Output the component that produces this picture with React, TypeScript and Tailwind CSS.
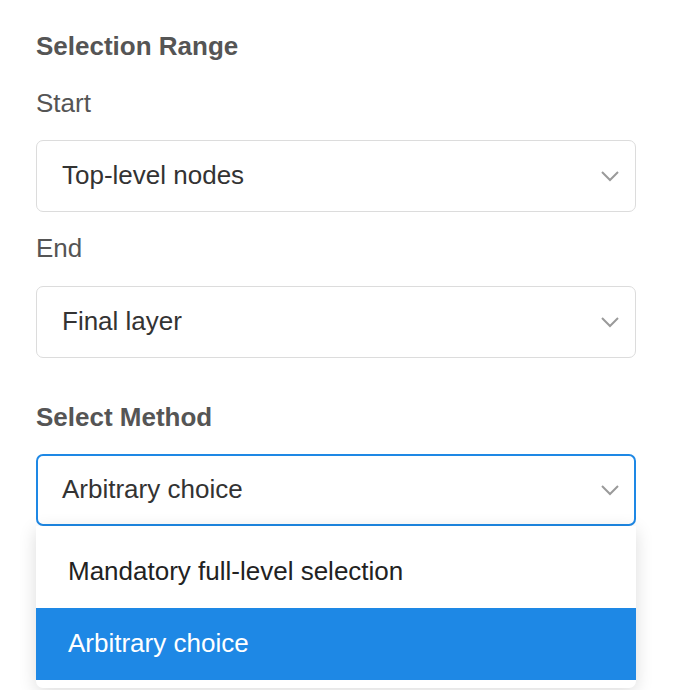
import React, { useState } from 'react';

const font = { fontFamily: '"Liberation Sans", Arial, sans-serif' };

function Chevron() {
  return (
    <svg width="20" height="12" viewBox="0 0 20 12" className="shrink-0">
      <path d="M2 2 L10 10 L18 2" fill="none" stroke="#9a9a9a" strokeWidth="2" />
    </svg>
  );
}

interface SelectBoxProps {
  value: string;
  active?: boolean;
}

function SelectBox({ value, active }: SelectBoxProps) {
  return (
    <div
      className={
        active
          ? 'h-[72px] rounded-[7px] border-2 border-[#1e88e5] bg-white flex items-center justify-between pl-[24px] pr-[14px]'
          : 'h-[72px] rounded-[7px] border-[1.5px] border-[#dcdcdc] bg-white flex items-center justify-between pl-[25px] pr-[15px]'
      }
    >
      <span className="text-[26px] leading-[30px] pb-[2px] text-[#333]">{value}</span>
      <Chevron />
    </div>
  );
}

export default function App() {
  const options = ['Mandatory full-level selection', 'Arbitrary choice'];
  const [method] = useState('Arbitrary choice');

  return (
    <div className="w-[674px] h-[690px] bg-white overflow-hidden" style={font}>
      <div className="ml-9 w-[600px] pt-[30px]">
        <h2 className="text-[26px] leading-[32px] font-bold text-[#555]">Selection Range</h2>

        <div className="mt-[25px] text-[26px] leading-[32px] text-[#555]">Start</div>
        <div className="mt-[21px]">
          <SelectBox value="Top-level nodes" />
        </div>

        <div className="mt-[20px] text-[26px] leading-[32px] text-[#555]">End</div>
        <div className="mt-[22px]">
          <SelectBox value="Final layer" />
        </div>

        <h2 className="mt-[43px] text-[26px] leading-[32px] font-bold text-[#555]">Select Method</h2>
        <div className="mt-[21px] relative">
          <SelectBox value={method} active />
          <div className="absolute left-0 right-0 top-full bg-white rounded-b-[7px] pt-[10px] pb-[8px] shadow-[0_4px_18px_rgba(0,0,0,0.14)]">
            {options.map(opt => (
              <div
                key={opt}
                className={
                  opt === method
                    ? 'h-[72px] flex items-center pl-[32px] pb-[2px] bg-[#1e88e5] text-white text-[26px]'
                    : 'h-[72px] flex items-center pl-[32px] pb-[2px] text-[#222] text-[26px]'
                }
              >
                {opt}
              </div>
            ))}
          </div>
        </div>
      </div>
    </div>
  );
}
